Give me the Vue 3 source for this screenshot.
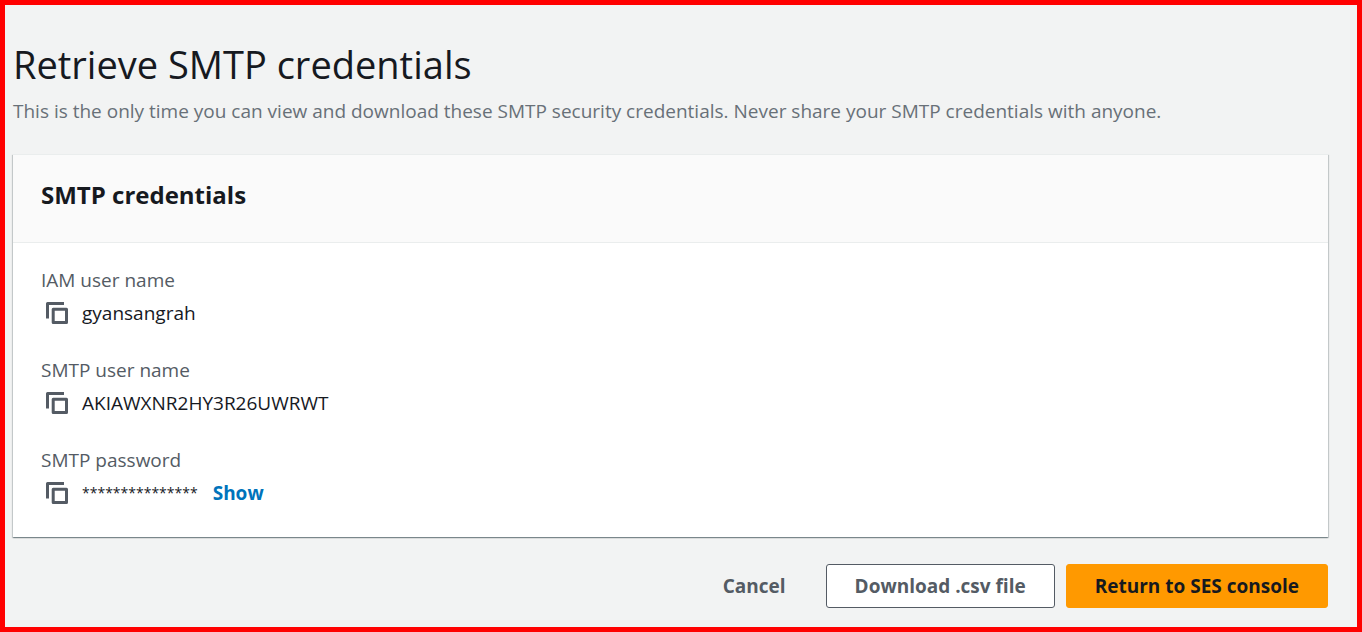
<script setup>
import { ref } from 'vue'

const shown = ref(false)
const fields = [
  { id: 'iam', label: 'IAM user name', value: 'gyansangrah' },
  { id: 'user', label: 'SMTP user name', value: 'AKIAWXNR2HY3R26UWRWT' },
  { id: 'password', label: 'SMTP password', value: '***************', secret: true },
]
</script>

<template>
  <main class="page">
    <header class="intro">
      <h1>Retrieve SMTP credentials</h1>
      <p>This is the only time you can view and download these SMTP security credentials. Never share your SMTP credentials with anyone.</p>
    </header>

    <section class="card" aria-labelledby="card-title">
      <div class="card-head">
        <h2 id="card-title">SMTP credentials</h2>
      </div>
      <dl class="fields">
        <div v-for="field in fields" :key="field.id" class="field">
          <dt>{{ field.label }}</dt>
          <dd>
            <button type="button" class="copy" :aria-label="'Copy ' + field.label">
              <svg viewBox="0 0 22 22" width="22" height="22" fill="none" stroke="currentColor" stroke-width="3" aria-hidden="true">
                <path d="M1.5 16.5V1.5H18" stroke-linejoin="round" />
                <path d="M7.2 7.2H20.5V20.5H7.2Z" stroke-linejoin="round" />
              </svg>
            </button>
            <span :class="{ masked: field.secret }">{{ field.value }}</span>
            <button v-if="field.secret" type="button" class="show" :aria-pressed="shown" @click="shown = !shown">Show</button>
          </dd>
        </div>
      </dl>
    </section>

    <footer class="actions">
      <button type="button" class="btn plain">Cancel</button>
      <button type="button" class="btn normal">Download .csv file</button>
      <button type="button" class="btn primary">Return to SES console</button>
    </footer>
  </main>
</template>

<style>
body {
  margin: 0;
  background: #f2f3f3;
}
</style>

<style scoped>
.page {
  box-sizing: border-box;
  min-height: 100vh;
  padding: 31px 29px 16px 8px;
  border: 5px solid #ff0000;
  background: #f2f3f3;
  color: #16191f;
  font-family: "Open Sans", "Noto Sans", sans-serif;
  font-size: 19px;
  line-height: 30px;
}
h1,
h2,
p,
dl,
dd {
  margin: 0;
}
h1 {
  font-size: 38px;
  font-weight: 400;
  line-height: 56px;
}
.intro p {
  margin-top: 4px;
  color: #687078;
}
.card {
  margin-top: 28px;
  background: #ffffff;
  border-top: 1px solid #eaeded;
  box-shadow: 0 1px 1px 0 rgba(0, 28, 36, 0.3), 1px 1px 1px 0 rgba(0, 28, 36, 0.15), -1px 1px 1px 0 rgba(0, 28, 36, 0.15);
}
.card-head {
  padding: 22px 28px 29px;
  background: #fafafa;
  border-bottom: 1px solid #eaeded;
}
h2 {
  font-size: 24px;
  font-weight: 700;
  line-height: 36px;
}
.fields {
  display: grid;
  gap: 27px;
  padding: 22px 28px 29px;
}
dt {
  color: #545b64;
}
dd {
  display: flex;
  align-items: center;
  margin-top: 3px;
}
button {
  font: inherit;
  cursor: pointer;
}
.copy {
  display: flex;
  margin-right: 9px;
  padding: 4px 5px;
  border: 0;
  background: none;
  color: #545b64;
}
.masked {
  font-size: 14px;
}
.show {
  margin-left: 15px;
  padding: 0;
  border: 0;
  background: none;
  color: #0073bb;
  font-weight: 700;
}
.actions {
  display: flex;
  justify-content: flex-end;
  gap: 11px;
  margin-top: 27px;
}
.btn {
  padding: 6px 28px;
  border: 1px solid transparent;
  border-radius: 3px;
  font-weight: 700;
}
.plain {
  background: none;
  color: #545b64;
}
.normal {
  background: #ffffff;
  border-color: #545b64;
  color: #545b64;
}
.primary {
  background: #ff9900;
  border-color: #ff9900;
  color: #16191f;
}
</style>
